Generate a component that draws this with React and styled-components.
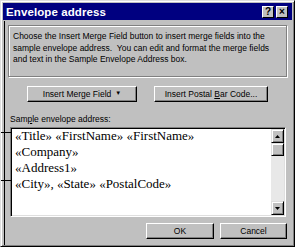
import React from 'react';
import styled, { createGlobalStyle } from 'styled-components';

const GlobalStyle = createGlobalStyle`
  body {
    margin: 0;
    background: #ffffff;
  }
`;

const Window = styled.div`
  position: relative;
  box-sizing: border-box;
  width: 295px;
  height: 247px;
  padding: 2px;
  background: #c0c0c0;
  border: 1px solid;
  border-color: #dfdfdf #000000 #000000 #dfdfdf;
  box-shadow: inset 1px 1px 0 #ffffff, inset -1px -1px 0 #808080;
  font-family: "Liberation Sans", Arial, sans-serif;
  display: flex;
  flex-direction: column;
`;

const TitleBar = styled.div`
  height: 17px;
  background: #000080;
  display: flex;
  align-items: center;
  justify-content: space-between;
  padding: 0 4px 0 3px;
`;

const Title = styled.span`
  color: #ffffff;
  font-weight: bold;
  font-size: 11.5px;
  letter-spacing: 0.1px;
`;

const TitleButtons = styled.div`
  display: flex;
  gap: 2px;
`;

const TitleButton = styled.div`
  box-sizing: border-box;
  width: 12px;
  height: 12px;
  background: #c0c0c0;
  border: 1px solid;
  border-color: #ffffff #000000 #000000 #ffffff;
  display: flex;
  align-items: center;
  justify-content: center;
  color: #000000;
  font-weight: bold;
  font-size: 10px;
  line-height: 1;
`;

const Body = styled.div`
  flex: 1;
  display: flex;
  flex-direction: column;
  padding: 5px 5px 0 5px;
`;

const GroupBox = styled.div`
  box-sizing: border-box;
  height: 52px;
  border: 1px solid #808080;
  box-shadow: 1px 1px 0 #ffffff, inset 1px 1px 0 #ffffff;
  padding: 5px 4px 0 4px;
  font-size: 8.5px;
  line-height: 11.5px;
  color: #000000;
`;

const ButtonRow = styled.div`
  display: flex;
  gap: 17px;
  margin: 9px 0 0 19px;
`;

const Button = styled.button`
  box-sizing: border-box;
  width: ${p => p.w}px;
  height: 16px;
  padding: 0;
  background: #c0c0c0;
  border: 1px solid;
  border-color: #ffffff #000000 #000000 #ffffff;
  box-shadow: inset -1px -1px 0 #808080;
  font-family: "Liberation Sans", Arial, sans-serif;
  font-size: 8.5px;
  color: #000000;
  display: flex;
  align-items: center;
  justify-content: center;
  gap: 4px;
`;

const Caret = styled.span`
  font-size: 6px;
  position: relative;
  top: -1px;
`;

const Label = styled.div`
  margin: 12px 0 0 2px;
  font-size: 8.5px;
  line-height: 11px;
`;

const TextBox = styled.div`
  box-sizing: border-box;
  height: 90px;
  margin: 2px 1px 0 2px;
  border: 1px solid;
  border-color: #808080 #ffffff #ffffff #808080;
  box-shadow: inset 1px 1px 0 #000000, inset -1px -1px 0 #dfdfdf;
  background: #ffffff;
  display: flex;
`;

const Lines = styled.div`
  flex: 1;
  padding: 0 0 0 4px;
  font-family: "Liberation Serif", "Times New Roman", serif;
  font-size: 13px;
  line-height: 16px;
  color: #000000;
`;

const ScrollBar = styled.div`
  width: 13px;
  margin: 1px 1px 1px 0;
  display: flex;
  flex-direction: column;
  background: #e8e8e8;
`;

const ScrollButton = styled.div`
  box-sizing: border-box;
  height: ${p => p.h}px;
  background: #c0c0c0;
  border: 1px solid;
  border-color: #dfdfdf #000000 #000000 #dfdfdf;
  box-shadow: inset 1px 1px 0 #ffffff, inset -1px -1px 0 #808080;
  display: flex;
  align-items: center;
  justify-content: center;
`;

const Track = styled.div`
  flex: 1;
`;

const Footer = styled.div`
  display: flex;
  justify-content: flex-end;
  gap: 6px;
  margin: 6px 0 0 0;
`;

const CalloutLine = styled.div`
  position: absolute;
  background: #000000;
`;

function Arrow({ down }) {
  return (
    <svg width="5" height="3" viewBox="0 0 5 3">
      <path d={down ? 'M0 0h5L2.5 3z' : 'M0 3h5L2.5 0z'} fill="#000" />
    </svg>
  );
}

export default function App() {
  return (
    <>
      <GlobalStyle />
      <Window>
        <TitleBar>
          <Title>Envelope address</Title>
          <TitleButtons>
            <TitleButton>?</TitleButton>
            <TitleButton>×</TitleButton>
          </TitleButtons>
        </TitleBar>
        <Body>
          <GroupBox>
            Choose the Insert Merge Field button to insert merge fields into the
            sample envelope address.&nbsp; You can edit and format the merge fields
            and text in the Sample Envelope Address box.
          </GroupBox>
          <ButtonRow>
            <Button w={110}><span>Insert Merge Field</span><Caret>▼</Caret></Button>
            <Button w={114}><span>Insert Postal <u>B</u>ar Code...</span></Button>
          </ButtonRow>
          <Label>Sam<u>p</u>le envelope address:</Label>
          <TextBox>
            <Lines>
              <div>«Title» «FirstName» «FirstName»</div>
              <div>«Company»</div>
              <div>«Address1»</div>
              <div>«City», «State» «PostalCode»</div>
            </Lines>
            <ScrollBar>
              <ScrollButton h={14}><Arrow /></ScrollButton>
              <ScrollButton h={13} />
              <Track />
              <ScrollButton h={14}><Arrow down /></ScrollButton>
            </ScrollBar>
          </TextBox>
          <Footer>
            <Button w={68}>OK</Button>
            <Button w={67}>Cancel</Button>
          </Footer>
        </Body>
        <CalloutLine style={{ left: 3, top: 20, width: 1, height: 224 }} />
        <CalloutLine style={{ left: 0, top: 131, width: 10, height: 1 }} />
        <CalloutLine style={{ left: 0, top: 179, width: 10, height: 1 }} />
      </Window>
    </>
  );
}
